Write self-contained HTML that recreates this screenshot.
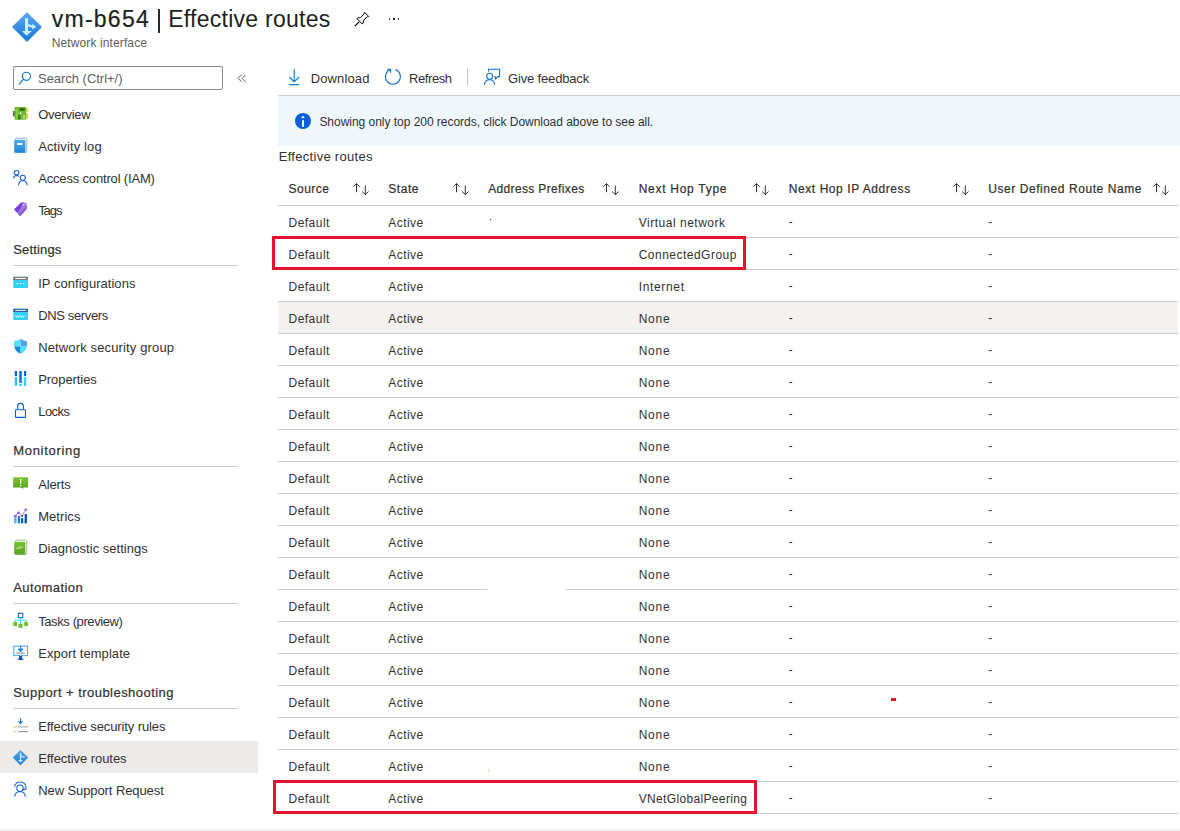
<!DOCTYPE html>
<html><head><meta charset="utf-8">
<style>
*{margin:0;padding:0;box-sizing:border-box}
html,body{width:1180px;height:831px;overflow:hidden;background:#fff;font-family:"Liberation Sans",sans-serif;color:#323130}
.a{position:absolute}
.t{position:absolute;white-space:nowrap;line-height:1}
</style></head><body>
<div class="a" style="left:0;top:741px;width:258px;height:32px;background:#edebe9"></div>
<div class="a" style="left:13px;top:66px;width:210px;height:24px;border:1px solid #8a8886;border-radius:2px"></div>
<div class="a" style="left:13px;top:265px;width:225px;height:1px;background:#cbcbcb"></div>
<div class="a" style="left:13px;top:466px;width:225px;height:1px;background:#cbcbcb"></div>
<div class="a" style="left:13px;top:603px;width:225px;height:1px;background:#cbcbcb"></div>
<div class="a" style="left:13px;top:708px;width:225px;height:1px;background:#cbcbcb"></div>
<div class="a" style="left:278px;top:95px;width:902px;height:1px;background:#d2d0ce"></div>
<div class="a" style="left:278px;top:96px;width:902px;height:50px;background:#eff6fc"></div>
<div class="a" style="left:467px;top:68px;width:1px;height:18px;background:#c8c6c4"></div>
<div class="a" style="left:278px;top:302px;width:900px;height:31px;background:#f3f2f1"></div>
<div class="a" style="left:278px;top:205px;width:900px;height:1px;background:#cdcccb"></div>
<div class="a" style="left:278px;top:237px;width:900px;height:1px;background:#cdcccb"></div>
<div class="a" style="left:278px;top:269px;width:900px;height:1px;background:#cdcccb"></div>
<div class="a" style="left:278px;top:301px;width:900px;height:1px;background:#cdcccb"></div>
<div class="a" style="left:278px;top:333px;width:900px;height:1px;background:#cdcccb"></div>
<div class="a" style="left:278px;top:365px;width:900px;height:1px;background:#cdcccb"></div>
<div class="a" style="left:278px;top:397px;width:900px;height:1px;background:#cdcccb"></div>
<div class="a" style="left:278px;top:429px;width:900px;height:1px;background:#cdcccb"></div>
<div class="a" style="left:278px;top:461px;width:900px;height:1px;background:#cdcccb"></div>
<div class="a" style="left:278px;top:493px;width:900px;height:1px;background:#cdcccb"></div>
<div class="a" style="left:278px;top:525px;width:900px;height:1px;background:#cdcccb"></div>
<div class="a" style="left:278px;top:557px;width:900px;height:1px;background:#cdcccb"></div>
<div class="a" style="left:278px;top:589px;width:209px;height:1px;background:#cdcccb"></div>
<div class="a" style="left:566px;top:589px;width:612px;height:1px;background:#cdcccb"></div>
<div class="a" style="left:278px;top:621px;width:900px;height:1px;background:#cdcccb"></div>
<div class="a" style="left:278px;top:653px;width:900px;height:1px;background:#cdcccb"></div>
<div class="a" style="left:278px;top:685px;width:900px;height:1px;background:#cdcccb"></div>
<div class="a" style="left:278px;top:717px;width:900px;height:1px;background:#cdcccb"></div>
<div class="a" style="left:278px;top:749px;width:900px;height:1px;background:#cdcccb"></div>
<div class="a" style="left:278px;top:781px;width:900px;height:1px;background:#cdcccb"></div>
<div class="a" style="left:278px;top:813px;width:900px;height:1px;background:#cdcccb"></div>
<div class="a" style="left:0;top:829px;width:1180px;height:2px;background:#efefef"></div>
<div class="a" style="left:158.3px;top:9px;width:1.5px;height:24px;background:#2b2a29"></div>
<div class="t" id="t1" style="left:51.70px;top:8.23px;font-size:23px;color:#201f1e;letter-spacing:1.266px;-webkit-text-stroke:0.22px currentColor;">vm-b654</div>
<div class="t" id="t2" style="left:168.20px;top:8.23px;font-size:23px;color:#201f1e;letter-spacing:0.267px;">Effective routes</div>
<div class="t" id="sub" style="left:51.70px;top:37.04px;font-size:12px;color:#605e5c;letter-spacing:0.119px;">Network interface</div>
<div class="t" id="srch" style="left:38.00px;top:72.00px;font-size:13px;color:#605e5c;letter-spacing:-0.029px;">Search (Ctrl+/)</div>
<div class="t" id="nav0" style="left:38.20px;top:108.00px;font-size:13px;color:#323130;letter-spacing:-0.243px;">Overview</div>
<div class="t" id="nav1" style="left:38.20px;top:140.00px;font-size:13px;color:#323130;letter-spacing:0.118px;">Activity log</div>
<div class="t" id="nav2" style="left:38.20px;top:172.00px;font-size:13px;color:#323130;letter-spacing:-0.168px;">Access control (IAM)</div>
<div class="t" id="nav3" style="left:38.20px;top:204.00px;font-size:13px;color:#323130;letter-spacing:-1.066px;">Tags</div>
<div class="t" id="nav4" style="left:38.20px;top:277.00px;font-size:13px;color:#323130;letter-spacing:0.039px;">IP configurations</div>
<div class="t" id="nav5" style="left:38.20px;top:309.00px;font-size:13px;color:#323130;letter-spacing:-0.360px;">DNS servers</div>
<div class="t" id="nav6" style="left:38.20px;top:341.00px;font-size:13px;color:#323130;letter-spacing:0.138px;">Network security group</div>
<div class="t" id="nav7" style="left:38.20px;top:373.00px;font-size:13px;color:#323130;letter-spacing:-0.066px;">Properties</div>
<div class="t" id="nav8" style="left:38.20px;top:405.00px;font-size:13px;color:#323130;letter-spacing:-0.525px;">Locks</div>
<div class="t" id="nav9" style="left:38.20px;top:477.70px;font-size:13px;color:#323130;letter-spacing:-0.140px;">Alerts</div>
<div class="t" id="nav10" style="left:38.20px;top:509.70px;font-size:13px;color:#323130;letter-spacing:0.051px;">Metrics</div>
<div class="t" id="nav11" style="left:38.20px;top:541.70px;font-size:13px;color:#323130;letter-spacing:0.028px;">Diagnostic settings</div>
<div class="t" id="nav12" style="left:38.20px;top:615.00px;font-size:13px;color:#323130;letter-spacing:-0.399px;">Tasks (preview)</div>
<div class="t" id="nav13" style="left:38.20px;top:647.00px;font-size:13px;color:#323130;letter-spacing:0.057px;">Export template</div>
<div class="t" id="nav14" style="left:38.20px;top:720.00px;font-size:13px;color:#323130;letter-spacing:-0.113px;">Effective security rules</div>
<div class="t" id="nav15" style="left:38.20px;top:752.00px;font-size:13px;color:#323130;letter-spacing:-0.067px;">Effective routes</div>
<div class="t" id="nav16" style="left:38.20px;top:784.00px;font-size:13px;color:#323130;letter-spacing:-0.089px;">New Support Request</div>
<div class="t" id="sec0" style="left:13.20px;top:242.80px;font-size:13px;color:#323130;letter-spacing:0.171px;-webkit-text-stroke:0.22px currentColor;">Settings</div>
<div class="t" id="sec1" style="left:13.20px;top:444.00px;font-size:13px;color:#323130;letter-spacing:0.700px;-webkit-text-stroke:0.22px currentColor;">Monitoring</div>
<div class="t" id="sec2" style="left:13.20px;top:580.80px;font-size:13px;color:#323130;letter-spacing:0.423px;-webkit-text-stroke:0.22px currentColor;">Automation</div>
<div class="t" id="sec3" style="left:13.20px;top:686.20px;font-size:13px;color:#323130;letter-spacing:0.463px;-webkit-text-stroke:0.22px currentColor;">Support + troubleshooting</div>
<div class="t" id="tb1" style="left:310.70px;top:72.00px;font-size:13px;color:#323130;letter-spacing:0.129px;">Download</div>
<div class="t" id="tb2" style="left:409.00px;top:72.00px;font-size:13px;color:#323130;letter-spacing:-0.417px;">Refresh</div>
<div class="t" id="tb3" style="left:508.00px;top:71.70px;font-size:13px;color:#323130;letter-spacing:-0.159px;">Give feedback</div>
<div class="t" id="info" style="left:319.40px;top:115.84px;font-size:12px;color:#323130;letter-spacing:-0.029px;">Showing only top 200 records, click Download above to see all.</div>
<div class="t" id="effr" style="left:278.70px;top:149.80px;font-size:13px;color:#323130;letter-spacing:0.294px;">Effective routes</div>
<div class="t" id="h0" style="left:288.50px;top:182.74px;font-size:12px;color:#323130;letter-spacing:0.500px;-webkit-text-stroke:0.22px currentColor;">Source</div>
<div class="t" id="h1" style="left:388.20px;top:182.74px;font-size:12px;color:#323130;letter-spacing:0.575px;-webkit-text-stroke:0.22px currentColor;">State</div>
<div class="t" id="h2" style="left:488.20px;top:182.74px;font-size:12px;color:#323130;letter-spacing:0.354px;-webkit-text-stroke:0.22px currentColor;">Address Prefixes</div>
<div class="t" id="h3" style="left:638.70px;top:182.74px;font-size:12px;color:#323130;letter-spacing:0.717px;-webkit-text-stroke:0.22px currentColor;">Next Hop Type</div>
<div class="t" id="h4" style="left:788.80px;top:182.74px;font-size:12px;color:#323130;letter-spacing:0.567px;-webkit-text-stroke:0.22px currentColor;">Next Hop IP Address</div>
<div class="t" id="h5" style="left:988.20px;top:182.74px;font-size:12px;color:#323130;letter-spacing:0.568px;-webkit-text-stroke:0.22px currentColor;">User Defined Route Name</div>
<div class="t" id="d0a" style="left:288.50px;top:216.74px;font-size:12px;color:#323130;letter-spacing:0.483px;">Default</div>
<div class="t" id="d0b" style="left:388.20px;top:216.74px;font-size:12px;color:#323130;letter-spacing:0.480px;">Active</div>
<div class="t" id="d0c" style="left:638.70px;top:216.74px;font-size:12px;color:#323130;letter-spacing:0.515px;">Virtual network</div>
<div class="t" id="d0d" style="left:788.80px;top:215.74px;font-size:12px;color:#323130;letter-spacing:0.000px;">-</div>
<div class="t" id="d0e" style="left:988.20px;top:215.74px;font-size:12px;color:#323130;letter-spacing:0.000px;">-</div>
<div class="t" id="d1a" style="left:288.50px;top:248.74px;font-size:12px;color:#323130;letter-spacing:0.483px;">Default</div>
<div class="t" id="d1b" style="left:388.20px;top:248.74px;font-size:12px;color:#323130;letter-spacing:0.480px;">Active</div>
<div class="t" id="d1c" style="left:638.70px;top:248.74px;font-size:12px;color:#323130;letter-spacing:0.485px;">ConnectedGroup</div>
<div class="t" id="d1d" style="left:788.80px;top:247.74px;font-size:12px;color:#323130;letter-spacing:0.000px;">-</div>
<div class="t" id="d1e" style="left:988.20px;top:247.74px;font-size:12px;color:#323130;letter-spacing:0.000px;">-</div>
<div class="t" id="d2a" style="left:288.50px;top:280.74px;font-size:12px;color:#323130;letter-spacing:0.483px;">Default</div>
<div class="t" id="d2b" style="left:388.20px;top:280.74px;font-size:12px;color:#323130;letter-spacing:0.480px;">Active</div>
<div class="t" id="d2c" style="left:638.70px;top:280.74px;font-size:12px;color:#323130;letter-spacing:0.658px;">Internet</div>
<div class="t" id="d2d" style="left:788.80px;top:279.74px;font-size:12px;color:#323130;letter-spacing:0.000px;">-</div>
<div class="t" id="d2e" style="left:988.20px;top:279.74px;font-size:12px;color:#323130;letter-spacing:0.000px;">-</div>
<div class="t" id="d3a" style="left:288.50px;top:312.74px;font-size:12px;color:#323130;letter-spacing:0.483px;">Default</div>
<div class="t" id="d3b" style="left:388.20px;top:312.74px;font-size:12px;color:#323130;letter-spacing:0.480px;">Active</div>
<div class="t" id="d3c" style="left:638.70px;top:312.74px;font-size:12px;color:#323130;letter-spacing:0.733px;">None</div>
<div class="t" id="d3d" style="left:788.80px;top:311.74px;font-size:12px;color:#323130;letter-spacing:0.000px;">-</div>
<div class="t" id="d3e" style="left:988.20px;top:311.74px;font-size:12px;color:#323130;letter-spacing:0.000px;">-</div>
<div class="t" id="d4a" style="left:288.50px;top:344.74px;font-size:12px;color:#323130;letter-spacing:0.483px;">Default</div>
<div class="t" id="d4b" style="left:388.20px;top:344.74px;font-size:12px;color:#323130;letter-spacing:0.480px;">Active</div>
<div class="t" id="d4c" style="left:638.70px;top:344.74px;font-size:12px;color:#323130;letter-spacing:0.733px;">None</div>
<div class="t" id="d4d" style="left:788.80px;top:343.74px;font-size:12px;color:#323130;letter-spacing:0.000px;">-</div>
<div class="t" id="d4e" style="left:988.20px;top:343.74px;font-size:12px;color:#323130;letter-spacing:0.000px;">-</div>
<div class="t" id="d5a" style="left:288.50px;top:376.74px;font-size:12px;color:#323130;letter-spacing:0.483px;">Default</div>
<div class="t" id="d5b" style="left:388.20px;top:376.74px;font-size:12px;color:#323130;letter-spacing:0.480px;">Active</div>
<div class="t" id="d5c" style="left:638.70px;top:376.74px;font-size:12px;color:#323130;letter-spacing:0.733px;">None</div>
<div class="t" id="d5d" style="left:788.80px;top:375.74px;font-size:12px;color:#323130;letter-spacing:0.000px;">-</div>
<div class="t" id="d5e" style="left:988.20px;top:375.74px;font-size:12px;color:#323130;letter-spacing:0.000px;">-</div>
<div class="t" id="d6a" style="left:288.50px;top:408.74px;font-size:12px;color:#323130;letter-spacing:0.483px;">Default</div>
<div class="t" id="d6b" style="left:388.20px;top:408.74px;font-size:12px;color:#323130;letter-spacing:0.480px;">Active</div>
<div class="t" id="d6c" style="left:638.70px;top:408.74px;font-size:12px;color:#323130;letter-spacing:0.733px;">None</div>
<div class="t" id="d6d" style="left:788.80px;top:407.74px;font-size:12px;color:#323130;letter-spacing:0.000px;">-</div>
<div class="t" id="d6e" style="left:988.20px;top:407.74px;font-size:12px;color:#323130;letter-spacing:0.000px;">-</div>
<div class="t" id="d7a" style="left:288.50px;top:440.74px;font-size:12px;color:#323130;letter-spacing:0.483px;">Default</div>
<div class="t" id="d7b" style="left:388.20px;top:440.74px;font-size:12px;color:#323130;letter-spacing:0.480px;">Active</div>
<div class="t" id="d7c" style="left:638.70px;top:440.74px;font-size:12px;color:#323130;letter-spacing:0.733px;">None</div>
<div class="t" id="d7d" style="left:788.80px;top:439.74px;font-size:12px;color:#323130;letter-spacing:0.000px;">-</div>
<div class="t" id="d7e" style="left:988.20px;top:439.74px;font-size:12px;color:#323130;letter-spacing:0.000px;">-</div>
<div class="t" id="d8a" style="left:288.50px;top:472.74px;font-size:12px;color:#323130;letter-spacing:0.483px;">Default</div>
<div class="t" id="d8b" style="left:388.20px;top:472.74px;font-size:12px;color:#323130;letter-spacing:0.480px;">Active</div>
<div class="t" id="d8c" style="left:638.70px;top:472.74px;font-size:12px;color:#323130;letter-spacing:0.733px;">None</div>
<div class="t" id="d8d" style="left:788.80px;top:471.74px;font-size:12px;color:#323130;letter-spacing:0.000px;">-</div>
<div class="t" id="d8e" style="left:988.20px;top:471.74px;font-size:12px;color:#323130;letter-spacing:0.000px;">-</div>
<div class="t" id="d9a" style="left:288.50px;top:504.74px;font-size:12px;color:#323130;letter-spacing:0.483px;">Default</div>
<div class="t" id="d9b" style="left:388.20px;top:504.74px;font-size:12px;color:#323130;letter-spacing:0.480px;">Active</div>
<div class="t" id="d9c" style="left:638.70px;top:504.74px;font-size:12px;color:#323130;letter-spacing:0.733px;">None</div>
<div class="t" id="d9d" style="left:788.80px;top:503.74px;font-size:12px;color:#323130;letter-spacing:0.000px;">-</div>
<div class="t" id="d9e" style="left:988.20px;top:503.74px;font-size:12px;color:#323130;letter-spacing:0.000px;">-</div>
<div class="t" id="d10a" style="left:288.50px;top:536.74px;font-size:12px;color:#323130;letter-spacing:0.483px;">Default</div>
<div class="t" id="d10b" style="left:388.20px;top:536.74px;font-size:12px;color:#323130;letter-spacing:0.480px;">Active</div>
<div class="t" id="d10c" style="left:638.70px;top:536.74px;font-size:12px;color:#323130;letter-spacing:0.733px;">None</div>
<div class="t" id="d10d" style="left:788.80px;top:535.74px;font-size:12px;color:#323130;letter-spacing:0.000px;">-</div>
<div class="t" id="d10e" style="left:988.20px;top:535.74px;font-size:12px;color:#323130;letter-spacing:0.000px;">-</div>
<div class="t" id="d11a" style="left:288.50px;top:568.74px;font-size:12px;color:#323130;letter-spacing:0.483px;">Default</div>
<div class="t" id="d11b" style="left:388.20px;top:568.74px;font-size:12px;color:#323130;letter-spacing:0.480px;">Active</div>
<div class="t" id="d11c" style="left:638.70px;top:568.74px;font-size:12px;color:#323130;letter-spacing:0.733px;">None</div>
<div class="t" id="d11d" style="left:788.80px;top:567.74px;font-size:12px;color:#323130;letter-spacing:0.000px;">-</div>
<div class="t" id="d11e" style="left:988.20px;top:567.74px;font-size:12px;color:#323130;letter-spacing:0.000px;">-</div>
<div class="t" id="d12a" style="left:288.50px;top:600.74px;font-size:12px;color:#323130;letter-spacing:0.483px;">Default</div>
<div class="t" id="d12b" style="left:388.20px;top:600.74px;font-size:12px;color:#323130;letter-spacing:0.480px;">Active</div>
<div class="t" id="d12c" style="left:638.70px;top:600.74px;font-size:12px;color:#323130;letter-spacing:0.733px;">None</div>
<div class="t" id="d12d" style="left:788.80px;top:599.74px;font-size:12px;color:#323130;letter-spacing:0.000px;">-</div>
<div class="t" id="d12e" style="left:988.20px;top:599.74px;font-size:12px;color:#323130;letter-spacing:0.000px;">-</div>
<div class="t" id="d13a" style="left:288.50px;top:632.74px;font-size:12px;color:#323130;letter-spacing:0.483px;">Default</div>
<div class="t" id="d13b" style="left:388.20px;top:632.74px;font-size:12px;color:#323130;letter-spacing:0.480px;">Active</div>
<div class="t" id="d13c" style="left:638.70px;top:632.74px;font-size:12px;color:#323130;letter-spacing:0.733px;">None</div>
<div class="t" id="d13d" style="left:788.80px;top:631.74px;font-size:12px;color:#323130;letter-spacing:0.000px;">-</div>
<div class="t" id="d13e" style="left:988.20px;top:631.74px;font-size:12px;color:#323130;letter-spacing:0.000px;">-</div>
<div class="t" id="d14a" style="left:288.50px;top:664.74px;font-size:12px;color:#323130;letter-spacing:0.483px;">Default</div>
<div class="t" id="d14b" style="left:388.20px;top:664.74px;font-size:12px;color:#323130;letter-spacing:0.480px;">Active</div>
<div class="t" id="d14c" style="left:638.70px;top:664.74px;font-size:12px;color:#323130;letter-spacing:0.733px;">None</div>
<div class="t" id="d14d" style="left:788.80px;top:663.74px;font-size:12px;color:#323130;letter-spacing:0.000px;">-</div>
<div class="t" id="d14e" style="left:988.20px;top:663.74px;font-size:12px;color:#323130;letter-spacing:0.000px;">-</div>
<div class="t" id="d15a" style="left:288.50px;top:696.74px;font-size:12px;color:#323130;letter-spacing:0.483px;">Default</div>
<div class="t" id="d15b" style="left:388.20px;top:696.74px;font-size:12px;color:#323130;letter-spacing:0.480px;">Active</div>
<div class="t" id="d15c" style="left:638.70px;top:696.74px;font-size:12px;color:#323130;letter-spacing:0.733px;">None</div>
<div class="t" id="d15d" style="left:788.80px;top:695.74px;font-size:12px;color:#323130;letter-spacing:0.000px;">-</div>
<div class="t" id="d15e" style="left:988.20px;top:695.74px;font-size:12px;color:#323130;letter-spacing:0.000px;">-</div>
<div class="t" id="d16a" style="left:288.50px;top:728.74px;font-size:12px;color:#323130;letter-spacing:0.483px;">Default</div>
<div class="t" id="d16b" style="left:388.20px;top:728.74px;font-size:12px;color:#323130;letter-spacing:0.480px;">Active</div>
<div class="t" id="d16c" style="left:638.70px;top:728.74px;font-size:12px;color:#323130;letter-spacing:0.733px;">None</div>
<div class="t" id="d16d" style="left:788.80px;top:727.74px;font-size:12px;color:#323130;letter-spacing:0.000px;">-</div>
<div class="t" id="d16e" style="left:988.20px;top:727.74px;font-size:12px;color:#323130;letter-spacing:0.000px;">-</div>
<div class="t" id="d17a" style="left:288.50px;top:760.74px;font-size:12px;color:#323130;letter-spacing:0.483px;">Default</div>
<div class="t" id="d17b" style="left:388.20px;top:760.74px;font-size:12px;color:#323130;letter-spacing:0.480px;">Active</div>
<div class="t" id="d17c" style="left:638.70px;top:760.74px;font-size:12px;color:#323130;letter-spacing:0.733px;">None</div>
<div class="t" id="d17d" style="left:788.80px;top:759.74px;font-size:12px;color:#323130;letter-spacing:0.000px;">-</div>
<div class="t" id="d17e" style="left:988.20px;top:759.74px;font-size:12px;color:#323130;letter-spacing:0.000px;">-</div>
<div class="t" id="d18a" style="left:288.50px;top:792.74px;font-size:12px;color:#323130;letter-spacing:0.483px;">Default</div>
<div class="t" id="d18b" style="left:388.20px;top:792.74px;font-size:12px;color:#323130;letter-spacing:0.480px;">Active</div>
<div class="t" id="d18c" style="left:638.70px;top:792.74px;font-size:12px;color:#323130;letter-spacing:0.344px;">VNetGlobalPeering</div>
<div class="t" id="d18d" style="left:788.80px;top:791.74px;font-size:12px;color:#323130;letter-spacing:0.000px;">-</div>
<div class="t" id="d18e" style="left:988.20px;top:791.74px;font-size:12px;color:#323130;letter-spacing:0.000px;">-</div>
<svg class="a" style="left:12px;top:12px" width="30" height="30" viewBox="0 0 30 30">
<defs><linearGradient id="gd" x1="0" y1="0" x2="0" y2="1"><stop offset="0" stop-color="#5ea5f0"/><stop offset="1" stop-color="#1479d6"/></linearGradient></defs>
<path d="M15 0.9 L29.1 15 L15 29.1 L0.9 15 Z" fill="url(#gd)" stroke="url(#gd)" stroke-width="1.2" stroke-linejoin="round"/>
<path d="M13 6.2 H16.1 V19 H19.8 L14.6 23.8 L10 19 H13 Z" fill="#c3f1ff"/>
<path d="M16 12.5 Q17.5 14.5 21 14.6" stroke="#c3f1ff" stroke-width="2.2" fill="none"/>
<path d="M20.3 11.8 L24.2 14.8 L20.3 17.6 Z" fill="#c3f1ff"/>
</svg>
<svg class="a" style="left:353px;top:11px" width="17" height="17" viewBox="0 0 17 17">
<path d="M1.8 15.2 L6 11" stroke="#000" stroke-width="1.1" fill="none"/>
<path d="M3.9 7.6 Q5.5 6.2 7.6 6.6 L11.3 2.6 Q11.1 1.6 11.5 1.2 L15.8 5.5 Q15.4 5.9 14.4 5.7 L10.4 9.4 Q10.8 11.5 9.4 13.1 Z" stroke="#000" stroke-width="1" fill="none" stroke-linejoin="round"/>
</svg>
<div class="a" style="left:388.5px;top:18px;width:1.6px;height:1.8px;background:#323130"></div>
<div class="a" style="left:393.2px;top:18px;width:1.6px;height:1.8px;background:#323130"></div>
<div class="a" style="left:397.9px;top:18px;width:1.6px;height:1.8px;background:#323130"></div>
<!-- search icon -->
<svg class="a" style="left:18px;top:71px" width="14" height="15" viewBox="0 0 14 15">
<circle cx="8.4" cy="5.3" r="4.1" stroke="#0078d4" stroke-width="1.1" fill="none"/>
<path d="M5.6 8.2 L1 13.3" stroke="#0078d4" stroke-width="1.2" fill="none"/>
</svg>
<svg class="a" style="left:236px;top:73px" width="12" height="11" viewBox="0 0 12 11">
<path d="M5.5 1.8 L2.2 5.3 L5.5 8.8 M9.5 1.8 L6.2 5.3 L9.5 8.8" stroke="#605e5c" stroke-width="1" fill="none"/>
</svg>
<!-- toolbar icons -->
<svg class="a" style="left:288px;top:68px" width="13" height="18" viewBox="0 0 13 18">
<path d="M6.2 1 V13.5 M1.3 9 L6.2 13.8 L11.1 9" stroke="#0078d4" stroke-width="1.1" fill="none"/>
<path d="M1.2 16.6 H11.2" stroke="#0078d4" stroke-width="1.2"/>
</svg>
<svg class="a" style="left:384px;top:68px" width="18" height="18" viewBox="0 0 18 18">
<path d="M11.4 1.6 A7.5 7.5 0 1 1 6.4 1.6" stroke="#0a6fd4" stroke-width="1.05" fill="none"/>
<path d="M3.1 1.3 H6.6 V4.7" stroke="#0a6fd4" stroke-width="1.1" fill="none"/>
</svg>
<svg class="a" style="left:483px;top:68px" width="18" height="18" viewBox="0 0 18 18">
<g stroke="#0a6fd4" stroke-width="1.05" fill="none">
<path d="M5.5 3.4 V1.3 H16.6 V8.6 H14.6 L12.6 11 L12.2 8.4 H11.2"/>
<circle cx="6.66" cy="8.3" r="3"/>
<path d="M1.4 16.8 Q1.6 11.7 6.6 11.7 Q11.4 11.7 11.6 16.8"/>
</g>
</svg>
<!-- info icon -->
<svg class="a" style="left:295px;top:113px" width="16" height="16" viewBox="0 0 16 16">
<circle cx="8" cy="8" r="8" fill="#0b5ed7"/>
<rect x="7" y="7.2" width="2" height="6.7" fill="#fff"/>
<circle cx="8" cy="4.2" r="1.25" fill="#fff"/>
</svg>
<svg class="a" style="left:353px;top:183px" width="17" height="13" viewBox="0 0 17 13"><path d="M3.5 9.2 V0.6 M0.4 3.7 L3.5 0.6 L6.6 3.7 M12.3 2.6 V11.6 M9.1 8.5 L12.3 11.6 L15.5 8.5" stroke="#323130" stroke-width="1" fill="none"/></svg>
<svg class="a" style="left:453px;top:183px" width="17" height="13" viewBox="0 0 17 13"><path d="M3.5 9.2 V0.6 M0.4 3.7 L3.5 0.6 L6.6 3.7 M12.3 2.6 V11.6 M9.1 8.5 L12.3 11.6 L15.5 8.5" stroke="#323130" stroke-width="1" fill="none"/></svg>
<svg class="a" style="left:603px;top:183px" width="17" height="13" viewBox="0 0 17 13"><path d="M3.5 9.2 V0.6 M0.4 3.7 L3.5 0.6 L6.6 3.7 M12.3 2.6 V11.6 M9.1 8.5 L12.3 11.6 L15.5 8.5" stroke="#323130" stroke-width="1" fill="none"/></svg>
<svg class="a" style="left:753px;top:183px" width="17" height="13" viewBox="0 0 17 13"><path d="M3.5 9.2 V0.6 M0.4 3.7 L3.5 0.6 L6.6 3.7 M12.3 2.6 V11.6 M9.1 8.5 L12.3 11.6 L15.5 8.5" stroke="#323130" stroke-width="1" fill="none"/></svg>
<svg class="a" style="left:953px;top:183px" width="17" height="13" viewBox="0 0 17 13"><path d="M3.5 9.2 V0.6 M0.4 3.7 L3.5 0.6 L6.6 3.7 M12.3 2.6 V11.6 M9.1 8.5 L12.3 11.6 L15.5 8.5" stroke="#323130" stroke-width="1" fill="none"/></svg>
<svg class="a" style="left:1153px;top:183px" width="17" height="13" viewBox="0 0 17 13"><path d="M3.5 9.2 V0.6 M0.4 3.7 L3.5 0.6 L6.6 3.7 M12.3 2.6 V11.6 M9.1 8.5 L12.3 11.6 L15.5 8.5" stroke="#323130" stroke-width="1" fill="none"/></svg>
<svg class="a" style="left:0;top:0" width="260" height="831" viewBox="0 0 260 831">
<defs>
<linearGradient id="gb" x1="0" y1="0" x2="0" y2="1"><stop offset="0" stop-color="#52acf2"/><stop offset="1" stop-color="#1a84dc"/></linearGradient>
<linearGradient id="gg" x1="0" y1="0" x2="0" y2="1"><stop offset="0" stop-color="#76c732"/><stop offset="1" stop-color="#5aa024"/></linearGradient>
<linearGradient id="gt" x1="0" y1="0" x2="1" y2="1"><stop offset="0" stop-color="#b18ae8"/><stop offset="1" stop-color="#7f4fd0"/></linearGradient>
<linearGradient id="gd2" x1="0" y1="0" x2="0" y2="1"><stop offset="0" stop-color="#5ea5f0"/><stop offset="1" stop-color="#1479d6"/></linearGradient>
</defs>
<!-- Overview -->
<rect x="12.8" y="111" width="2.4" height="5.5" fill="#6e6e6e"/>
<rect x="25.6" y="108" width="2.6" height="3.8" rx="0.8" fill="#f2d13d"/>
<rect x="25.6" y="113.3" width="2.6" height="5.4" rx="0.8" fill="#f2d13d"/>
<rect x="14.6" y="107" width="11.6" height="12.8" rx="0.6" fill="#6cbf2f"/>
<rect x="19.6" y="108.2" width="5.2" height="2.4" fill="#2f5a0f"/>
<rect x="18" y="115.2" width="2.6" height="4.2" fill="#3e7a1a"/>
<rect x="16" y="108.5" width="2" height="10" fill="#8ad43f" opacity="0.7"/>
<circle cx="20.6" cy="113.2" r="0.9" fill="#f4f4f4"/>
<rect x="23.6" y="115" width="0.9" height="4" fill="#f0f0f0"/>
<!-- Activity log -->
<rect x="15.5" y="138.2" width="11.3" height="14.2" rx="1" fill="none" stroke="#8fb4db" stroke-width="1"/>
<rect x="14.2" y="139.8" width="11.2" height="13" rx="0.8" fill="url(#gb)"/>
<rect x="17.2" y="143" width="5" height="2" fill="#fff"/>
<!-- Access control -->
<g stroke="#0a5fd6" stroke-width="1.05" fill="none">
<circle cx="16.5" cy="172.8" r="2.3"/>
<path d="M13.4 178.3 Q13.8 175.9 16.4 175.4 Q18 175.4 19 176.4"/>
<circle cx="22.8" cy="177.8" r="2.6"/>
<path d="M18.5 185.2 Q19 180.6 22.8 180.4 Q26.6 180.6 27.3 185.2"/>
</g>
<!-- Tags -->
<path d="M14.1 209.5 L20.6 203.1 Q21.2 202.6 22.2 202.6 L24.8 202.6 Q26.9 202.8 26.9 205 L26.9 208.2 Q26.9 209 26.3 209.6 L20.1 216.2 Z" fill="#a27ddf"/>
<path d="M20.1 216.2 L26.3 209.6 Q26.9 209 26.9 208.2 L26.9 206 L18 214.1 Z" fill="#8a5fd3"/>
<path d="M14.1 209.5 L20.6 203.1 Q21.2 202.6 22.2 202.6 L24.4 202.7 L17.4 212.8 Z" fill="#7a3fe0"/>
<circle cx="23.5" cy="204.6" r="0.9" fill="#fff"/>
<!-- IP configurations -->
<rect x="13.3" y="276.8" width="14.6" height="11.2" rx="0.6" fill="#32cff2"/>
<rect x="13.3" y="276.8" width="14.6" height="3.2" fill="#7a7a7a"/>
<rect x="15.2" y="277.9" width="10.8" height="1.1" fill="#f0f0f0"/>
<circle cx="17.5" cy="283.6" r="0.8" fill="#fff"/><circle cx="20.6" cy="283.6" r="0.8" fill="#fff"/><circle cx="23.7" cy="283.6" r="0.8" fill="#fff"/>
<!-- DNS -->
<rect x="13.3" y="308.8" width="14.6" height="11.2" rx="0.6" fill="#32cff2"/>
<rect x="13.3" y="308.8" width="14.6" height="3.2" fill="#1e5fa6"/>
<rect x="15.2" y="309.9" width="10.8" height="1.1" fill="#e8e8e8"/>
<path d="M15.4 315.2 L16.4 317.4 L17.5 315.6 L18.6 317.4 L19.6 315.2 M20.4 315.2 L21.4 317.4 L22.4 315.6 L23.4 317.4 L24.4 315.2" stroke="#eaffff" stroke-width="0.8" fill="none"/>
<!-- NSG shield -->
<path d="M14.1 341.2 Q17.5 341 20.6 338.8 L20.6 346.5 L14.1 346.5 Z" fill="#4de3fb"/>
<path d="M20.6 338.8 Q23.7 341 27 341.2 L27 346.5 L20.6 346.5 Z" fill="#559ff0"/>
<path d="M14.1 346.5 L20.6 346.5 L20.6 354 Q15 351 14.6 347.5 Z" fill="#1a86de"/>
<path d="M20.6 346.5 L27 346.5 L26.6 347.5 Q26 351 20.6 354 Z" fill="#4de3fb"/>
<!-- Properties -->
<rect x="14.8" y="371" width="2.2" height="5" fill="#0f62d6"/><rect x="14.8" y="377" width="2.2" height="9" fill="#29c6ee"/>
<rect x="19.2" y="371" width="2.6" height="11.8" fill="#1473d8"/><rect x="19.2" y="383.8" width="2.6" height="2.2" fill="#3bd6f8"/>
<rect x="24" y="371" width="2.2" height="5" fill="#0f62d6"/><rect x="24" y="377" width="2.2" height="9" fill="#36d8f8"/>
<!-- Locks -->
<g stroke="#0a5fd6" stroke-width="1.1" fill="none">
<path d="M17.6 409.5 V406.2 Q17.6 403.4 20.5 403.4 Q23.4 403.4 23.4 406.2 V409.5"/>
<rect x="15.5" y="409.8" width="10" height="7.6" rx="0.5"/>
</g>
<!-- Alerts -->
<path d="M13.2 477.2 H28 V487.4 H23.5 L22.4 489 L21.2 487.4 H13.2 Z" fill="url(#gg)"/>
<rect x="20" y="479" width="1.3" height="4.8" fill="#fff"/><rect x="20" y="484.9" width="1.3" height="1.3" fill="#fff"/>
<!-- Metrics -->
<rect x="14" y="517.5" width="2.6" height="5.8" fill="#6aaef0"/><rect x="16.6" y="517.5" width="1.2" height="5.8" fill="#c4def6"/>
<rect x="17.9" y="516" width="2.2" height="7.3" fill="#1a80da"/>
<rect x="21" y="518.2" width="2.2" height="5.1" fill="#0a5cb0"/><rect x="23.2" y="518.2" width="1.2" height="5.1" fill="#b8d2ec"/>
<rect x="24.6" y="514" width="2.4" height="9.3" fill="#0a5cb0"/>
<path d="M15.3 516.2 L18.5 512.8 L22 516 L25.8 509.8" stroke="#9b6ff0" stroke-width="0.9" fill="none"/>
<circle cx="15.3" cy="516.2" r="1.4" fill="#8f5ce8"/><circle cx="18.5" cy="512.8" r="1.3" fill="#8f5ce8"/><circle cx="22" cy="516" r="1.1" fill="#6a2ee0"/><circle cx="25.8" cy="509.8" r="1.3" fill="#8f5ce8"/>
<!-- Diagnostic settings -->
<rect x="15.5" y="540.2" width="11.3" height="14.2" rx="1" fill="none" stroke="#9cc47c" stroke-width="1"/>
<rect x="14.2" y="541.8" width="11.2" height="12.8" rx="0.8" fill="url(#gg)"/>
<path d="M16.3 548.5 L17.5 548 L18.3 549 L19.4 546.2 L20.4 548.3 L23 546.4" stroke="#d8f0c8" stroke-width="0.8" fill="none"/>
<!-- Tasks -->
<rect x="18.4" y="613.3" width="4.4" height="4.4" fill="none" stroke="#0f6ad4" stroke-width="1.1"/>
<path d="M20.6 618 V624 M15.2 622 V620.2 H26 V622" stroke="#48dcfa" stroke-width="1.1" fill="none"/>
<rect x="13.3" y="622" width="3.7" height="4" fill="#6cbf2f"/>
<rect x="18.5" y="624" width="4" height="3.8" fill="#6cbf2f"/>
<rect x="24.2" y="622" width="3.8" height="4" fill="#6cbf2f"/>
<!-- Export template -->
<rect x="13.8" y="646.2" width="13.6" height="9.4" fill="#fff" stroke="#56a8ec" stroke-width="1.1"/>
<path d="M20.6 645.5 V650 M18.2 649 L20.6 651.8 L23 649 Z" stroke="#1a88e8" stroke-width="1" fill="#1a88e8"/>
<rect x="16.2" y="652.4" width="8.6" height="1.4" fill="#a8a8a8"/>
<path d="M19.2 656 H22 L22.6 659 L24 660 H17.2 L18.6 659 Z" fill="#1c56a8"/>
<!-- Effective security rules -->
<path d="M20.5 718 V723.5 M18.4 721 L20.5 723.6 L22.6 721" stroke="#1577d8" stroke-width="1.1" fill="none"/>
<path d="M13.2 726.4 L14.4 727.8 L17.4 725.2 M13.2 731 L14.4 732.3 L16.8 730.2" stroke="#b6d43a" stroke-width="0.9" fill="none"/>
<rect x="18" y="726" width="10" height="1.7" fill="#c6c6c6"/>
<rect x="18" y="731" width="10" height="1.2" fill="#9a9a9a"/>
<!-- Effective routes -->
<path d="M20.5 750.2 L28 757.6 L20.5 765 L13 757.6 Z" fill="url(#gd2)" stroke="url(#gd2)" stroke-width="0.5" stroke-linejoin="round"/>
<path d="M19.9 753 H21.2 V760 H22.9 L20.55 762.6 L18.2 760 H19.9 Z" fill="#c3f1ff"/>
<path d="M21 755.6 Q21.8 757.3 24.8 757.2" stroke="#c3f1ff" stroke-width="1.3" fill="none"/>
<!-- New Support Request -->
<g stroke="#0a5fd6" stroke-width="1.05" fill="none">
<path d="M14.5 786.6 Q15.6 782 20.4 782 Q25.8 782 26.2 788.4 Q26 789.6 24 789.6 L22 789.6"/>
<circle cx="20" cy="788.2" r="3.2"/>
<path d="M14.6 796.6 Q15.4 791.6 20 791.4 Q24.8 791.6 25.4 796.6"/>
</g>
</svg>
<div class="a" style="left:272px;top:236px;width:474px;height:34px;border:3px solid #e8112d"></div>
<div class="a" style="left:273px;top:780px;width:484px;height:34px;border:3px solid #e8112d"></div>
<div class="a" style="left:891px;top:698px;width:5px;height:3px;background:#e8112d"></div>
<div class="a" style="left:490px;top:219px;width:1px;height:1px;background:#3a3a6a"></div>
<div class="a" style="left:488px;top:770px;width:1px;height:2px;background:#f6c27a"></div>
</body></html>
